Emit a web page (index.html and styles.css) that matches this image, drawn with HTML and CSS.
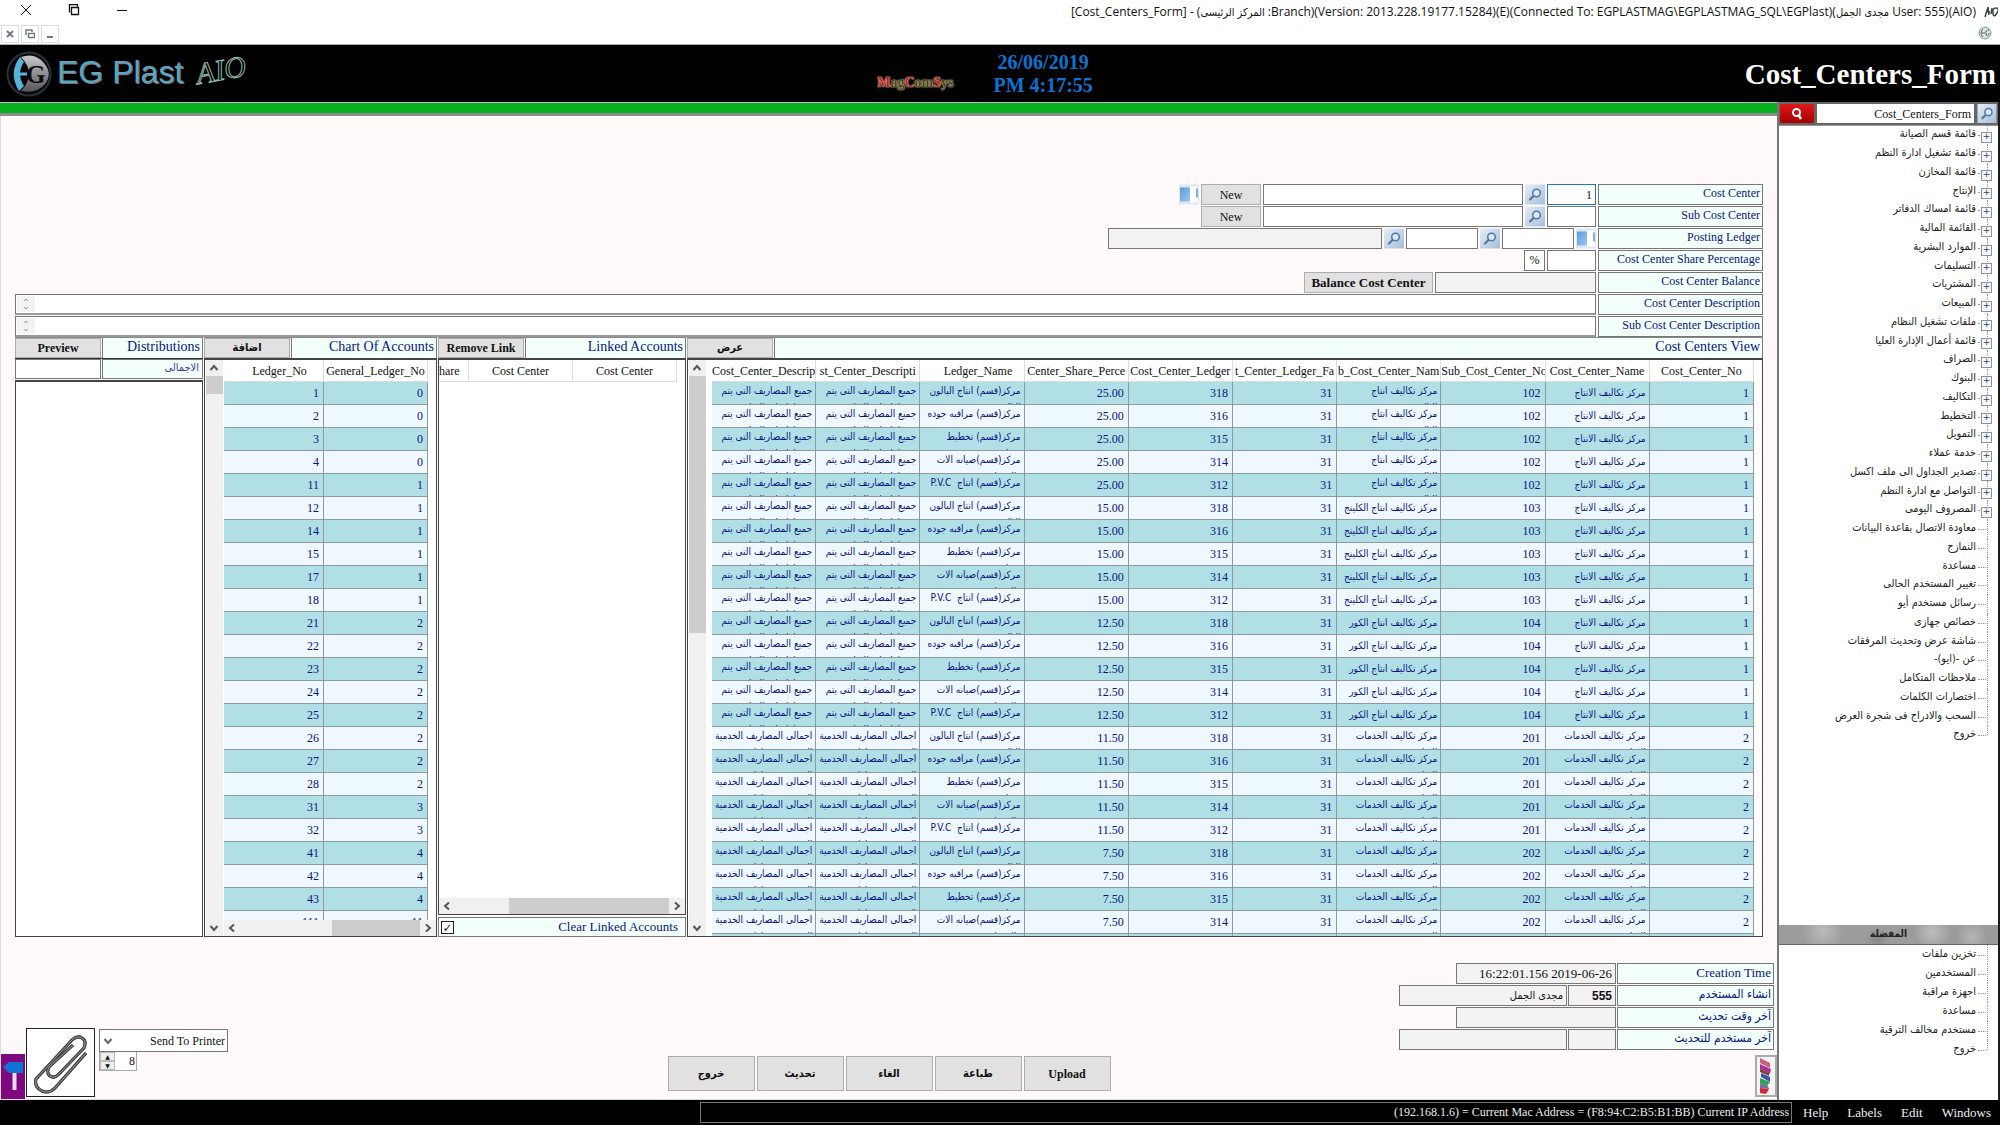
FILE: index.html
```html
<!DOCTYPE html>
<html lang="en">
<head>
<meta charset="utf-8">
<title>Cost_Centers_Form</title>
<link rel="stylesheet" href="styles.css">
</head>
<body>
<svg class="sprite" aria-hidden="true">
  <defs>
    <linearGradient id="lensbg" x1="0" y1="0" x2="1" y2="1"><stop offset="0" stop-color="#e6eef6"/><stop offset="1" stop-color="#a3bfdc"/></linearGradient>
    <linearGradient id="cardbg" x1="0" y1="0" x2="1" y2="1"><stop offset="0" stop-color="#5c9bd8"/><stop offset="1" stop-color="#9cc8f0"/></linearGradient>
    <linearGradient id="logobg" x1="0" y1="0" x2="0" y2="1"><stop offset="0" stop-color="#c9c9cc"/><stop offset="1" stop-color="#55555a"/></linearGradient>
  </defs>
  <symbol id="lens" viewBox="0 0 20 20">
    <rect width="20" height="20" fill="url(#lensbg)"/>
    <path d="M8.500 11.500 5 15" stroke="#5b7693" stroke-width="2.200" stroke-linecap="round"/>
    <circle cx="11.500" cy="8.500" r="3.800" fill="#d6ebfa" stroke="#54779c" stroke-width="1.500"/>
  </symbol>
  <symbol id="card" viewBox="0 0 20 20">
    <rect width="20" height="20" fill="#dbe9f6"/>
    <rect x="1" y="3" width="10" height="14" fill="url(#cardbg)"/>
    <rect x="11" y="2" width="8" height="16" fill="#fff"/>
    <rect x="17" y="4" width="2" height="9" fill="#7fb0e0"/>
  </symbol>
  <symbol id="up" viewBox="0 0 16 16"><path d="M4.500 10 8 6l3.500 4" fill="none" stroke="currentColor" stroke-width="2"/></symbol>
  <symbol id="down" viewBox="0 0 16 16"><path d="M4.500 6 8 10l3.500-4" fill="none" stroke="currentColor" stroke-width="2"/></symbol>
  <symbol id="left" viewBox="0 0 16 16"><path d="M10 4.500 6 8l4 3.500" fill="none" stroke="currentColor" stroke-width="2"/></symbol>
  <symbol id="right" viewBox="0 0 16 16"><path d="M6 4.500 10 8l-4 3.500" fill="none" stroke="currentColor" stroke-width="2"/></symbol>
</svg>

<header class="titlebar">
  <div class="caption-row">
    <div class="caption-buttons">
      <button aria-label="Close"><svg width="12" height="12"><path d="M1 1 11 11M11 1 1 11" stroke="#111"/></svg></button>
      <button aria-label="Restore"><svg width="12" height="12"><path d="M3.500 3.500h7v7h-7zM1.500 8.500v-8h8v2" fill="none" stroke="#111" stroke-width="1.300"/></svg></button>
      <button aria-label="Minimize"><svg width="12" height="12"><path d="M1 6.500h10" stroke="#111"/></svg></button>
    </div>
    <h1 class="window-title">[Cost_Centers_Form] - (<span class="ar">المركز الرئيسى</span> :Branch)(Version: 2013.228.19177.15284)(E)(Connected To: EGPLASTMAG\EGPLASTMAG_SQL\EGPlast)(<span class="ar">مجدى الجمل</span> User: 555)(AIO)</h1>
    <svg class="app-icon" width="14" height="12"><path d="M1 11 4 1l1 8M2 6h4M8 2 7 8M9 8q-1-6 3-6t1 5-4 1" fill="none" stroke="#3b4a44" stroke-width="1.500"/></svg>
  </div>
  <div class="child-row">
    <div class="child-buttons">
      <button aria-label="Close form"><svg width="8" height="8"><path d="M1 1 7 7M7 1 1 7" stroke="#70788a" stroke-width="2"/></svg></button>
      <button aria-label="Restore form"><svg width="10" height="10"><path d="M3.500 4.500h6v4h-6zM1 6V1h6v2" fill="none" stroke="#70788a" stroke-width="1.500"/></svg></button>
      <button aria-label="Minimize form"><svg width="8" height="8"><path d="M1 7h6" stroke="#70788a" stroke-width="2"/></svg></button>
    </div>
    <svg class="globe" width="14" height="14"><circle cx="7" cy="7" r="6" fill="#dfe5e2" stroke="#8a9a94"/><path d="M5 3q-4 4 0 8M4 7h3M11 4q-4 0-3 4t3 0v-1" fill="none" stroke="#4c6b62"/></svg>
  </div>
</header>

<div class="banner">
  <div class="brand">
    <svg width="46" height="46" viewBox="0 0 46 46">
      <circle cx="23" cy="23" r="21.500" fill="#08080a" stroke="#26333a" stroke-width="2"/>
      <path d="M14 6q-12 16-1 34l5-5q-8-12 0-24z" fill="#56b4d8"/>
      <path d="M14 23h7" stroke="#56b4d8" stroke-width="3"/>
      <path d="M15 6q14-5 23 6t1 21-24 7q16-17 0-34z" fill="url(#logobg)"/>
      <text x="20" y="32" class="logo-g">G</text>
    </svg>
    <span class="brand-name">EG Plast</span>
    <span class="brand-aio">AIO</span>
  </div>
  <div class="banner-mid">
    <span class="vendor"><b>M</b>ag<b>C</b>om<b>S</b>ys</span>
    <div class="clock"><span>26/06/2019</span><span>PM 4:17:55</span></div>
  </div>
  <h2 class="form-title">Cost_Centers_Form</h2>
</div>

<div class="shell">
<main class="workspace">
  <div class="greenbar"></div>
  <div class="content">
    <form class="fields" dir="rtl">
      <div class="row">
        <label class="tag" for="cc">Cost Center</label>
        <input id="cc" class="box w49 focus" value="1">
        <button type="button" class="ico" aria-label="Find cost center"><svg><use href="#lens"/></svg></button>
        <input class="box w260" aria-label="Cost center name">
        <button type="button" class="btn w60">New</button>
        <button type="button" class="ico" aria-label="Cost center card"><svg><use href="#card"/></svg></button>
      </div>
      <div class="row">
        <label class="tag" for="scc">Sub Cost Center</label>
        <input id="scc" class="box w49">
        <button type="button" class="ico" aria-label="Find sub cost center"><svg><use href="#lens"/></svg></button>
        <input class="box w260" aria-label="Sub cost center name">
        <button type="button" class="btn w60">New</button>
      </div>
      <div class="row">
        <label class="tag" for="pl">Posting Ledger</label>
        <button type="button" class="ico" aria-label="Ledger card"><svg><use href="#card"/></svg></button>
        <input id="pl" class="box w72">
        <button type="button" class="ico" aria-label="Find general ledger"><svg><use href="#lens"/></svg></button>
        <input class="box w72" aria-label="Ledger number">
        <button type="button" class="ico" aria-label="Find ledger"><svg><use href="#lens"/></svg></button>
        <input class="box off w274" aria-label="Ledger name" readonly>
      </div>
      <div class="row">
        <label class="tag" for="share">Cost Center Share Percentage</label>
        <input id="share" class="box w49">
        <span class="box pct">%</span>
      </div>
      <div class="row">
        <label class="tag" for="bal">Cost Center Balance</label>
        <input id="bal" class="box off w161" readonly>
        <button type="button" class="btn strong w129">Balance Cost Center</button>
      </div>
      <div class="row wide">
        <label class="tag" for="desc">Cost Center Description</label>
        <div class="memo"><textarea id="desc"></textarea><span class="mini"><svg><use href="#up"/></svg><svg><use href="#down"/></svg></span></div>
      </div>
      <div class="row wide">
        <label class="tag" for="sdesc">Sub Cost Center Description</label>
        <div class="memo"><textarea id="sdesc"></textarea><span class="mini"><svg><use href="#up"/></svg><svg><use href="#down"/></svg></span></div>
      </div>
    </form>

    <div class="panels">
      <section class="panel">
        <div class="head"><button class="btn strong w86">Preview</button><h3>Distributions</h3></div>
        <div class="total"><input id="total" class="box w86"><label class="ar" for="total">الاجمالى</label></div>
        <div class="frame grow"></div>
      </section>
      <section class="panel">
        <div class="head"><button class="btn strong ar w86">اضافة</button><h3>Chart Of Accounts</h3></div>
        <div class="frame grow split">
          <div class="vbar"><svg><use href="#up"/></svg><i class="thumb short"></i><svg class="end"><use href="#down"/></svg></div>
          <div class="pane">
            <div class="view"><table class="grid ledger"><colgroup><col class="c100"><col class="c104"></colgroup><thead><tr><th class="lead">Ledger_No</th><th>General_Ledger_No</th></tr></thead><tbody id="ledgers"></tbody></table></div>
            <div class="hbar"><svg><use href="#left"/></svg><i class="thumb"></i><svg><use href="#right"/></svg></div>
          </div>
        </div>
      </section>
      <section class="panel">
        <div class="head"><button class="btn strong w86">Remove Link</button><h3>Linked Accounts</h3></div>
        <div class="frame grow pane">
          <div class="view"><table class="grid linked"><thead><tr><th class="cut">hare</th><th>Cost Center</th><th>Cost Center</th></tr></thead></table></div>
          <div class="hbar long"><svg><use href="#left"/></svg><i class="thumb"></i><svg><use href="#right"/></svg></div>
        </div>
        <label class="clear"><input type="checkbox" checked><span>Clear Linked Accounts</span></label>
      </section>
      <section class="panel">
        <div class="head"><button class="btn strong ar w86">عرض</button><h3>Cost Centers View</h3></div>
        <div class="frame grow split main-view">
          <div class="vbar"><svg><use href="#up"/></svg><i class="thumb tall"></i><svg class="end"><use href="#down"/></svg></div>
          <div class="view"><table class="grid centers"><thead><tr><th>Cost_Center_Descrip</th><th>st_Center_Descripti</th><th class="lead">Ledger_Name</th><th>Center_Share_Perce</th><th>Cost_Center_Ledger</th><th>t_Center_Ledger_Fa</th><th>b_Cost_Center_Nam</th><th>Sub_Cost_Center_No</th><th>Cost_Center_Name</th><th>Cost_Center_No</th></tr></thead><tbody id="centers"></tbody></table></div>
        </div>
      </section>
    </div>

    <div class="bottom">
      <div class="tools">
        <button class="pin" aria-label="Pin"><svg width="24" height="45"><path d="M2 13 8 8h14v11H8z" fill="#1273d6"/><path d="M13.500 19v17" stroke="#eadcf0" stroke-width="4"/></svg></button>
        <button class="clip" aria-label="Attachments"><svg width="64" height="64" viewBox="0 0 64 64" fill="none"><path id="wire" d="M57 22 26 57q-6 6-13 3-8-4-6-12L43 9q5-5 10-2t2 10L30 43q-5 5-9 2t-1-9L44 14" stroke="#444" stroke-width="3"/><use href="#wire"/><path d="M57 22 26 57q-6 6-13 3-8-4-6-12L43 9q5-5 10-2t2 10L30 43q-5 5-9 2t-1-9L44 14" stroke="#999"/></svg></button>
        <div class="print">
          <div class="combo"><svg><use href="#down"/></svg><select aria-label="Output" dir="rtl"><option>Send To Printer</option></select></div>
          <div class="spin"><span class="steps"><button aria-label="More">▲</button><button aria-label="Less">▼</button></span><input aria-label="Copies" value="8"></div>
        </div>
      </div>
      <div class="actions">
        <button class="btn strong ar">خروج</button><button class="btn strong ar">تحديث</button><button class="btn strong ar">الغاء</button><button class="btn strong ar">طباعة</button><button class="btn strong">Upload</button>
      </div>
      <div class="audit" dir="rtl">
        <div class="row"><label class="tag" for="a1">Creation Time</label><input id="a1" class="box off w160" dir="ltr" value="16:22:01.156 2019-06-26" readonly></div>
        <div class="row"><label class="tag ar" for="a2">انشاء المستخدم</label><input id="a2" class="box off id" value="555" readonly><input class="box off ar w168" aria-label="Created by" value="مجدى الجمل" readonly></div>
        <div class="row"><label class="tag ar" for="a3">آخر وقت تحديث</label><input id="a3" class="box off w160" readonly></div>
        <div class="row"><label class="tag ar" for="a4">آخر مستخدم للتحديث</label><input id="a4" class="box off id" readonly><input class="box off w168" aria-label="Updated by" readonly></div>
        <button class="palette" aria-label="Colours"><svg width="17" height="38" viewBox="0 0 17 38"><path fill="#c8607a" d="M2 1 12 6v5L2 6z"/><path fill="#a8329a" d="M2 7l11 5-1 5L2 12z"/><path fill="#7a4a2c" d="M2 12l9 4v3L2 15z"/><path fill="#3b52b8" d="M3 16l9 4v5L3 20z"/><path fill="#2ea44f" d="M2 21l10 4-3 4-7-3z"/><path fill="#7a6fa0" d="M2 26l8 3 1 3-9-1z"/><path fill="#d02838" d="M2 31l9 1-3 5-6-1z"/></svg></button>
      </div>
    </div>
  </div>
</main>

<aside class="sidebar">
  <div class="search">
    <button class="red" aria-label="Search"><svg width="14" height="14"><circle cx="6.500" cy="5.500" r="3.500" fill="none" stroke="#fff" stroke-width="2"/><path d="M8.500 8 11 12" stroke="#fff" stroke-width="2.500"/></svg></button>
    <input aria-label="Form name" value="Cost_Centers_Form">
    <button class="ico" aria-label="Find form"><svg><use href="#lens"/></svg></button>
  </div>
  <ul class="tree ar" dir="rtl" id="menu"></ul>
  <h3 class="fav ar">المفضلة</h3>
  <ul class="tree favs ar" dir="rtl" id="favourites"></ul>
</aside>
</div>

<footer class="status">
  <div class="address">(192.168.1.6) = Current Mac Address = (F8:94:C2:B5:B1:BB) Current IP Address</div>
  <nav><button>Help</button><button>Labels</button><button>Edit</button><button>Windows</button></nav>
</footer>
<script src="app.js"></script>
</body>
</html>
```
FILE: app.js
```js
const fill = (id, html) => { document.getElementById(id).innerHTML = html; };

// Navigation tree: the first group of entries can be expanded.
const groups = ["قائمة قسم الصيانة", "قائمة تشغيل ادارة النظم", "قائمة المخازن", "الإنتاج", "قائمة امساك الدفاتر", "القائمة المالية", "الموارد البشرية", "التسليمات", "المشتريات", "المبيعات", "ملفات تشغيل النظام", "قائمة أعمال الإدارة العليا", "الصراف", "البنوك", "التكاليف", "التخطيط", "التمويل", "خدمة عملاء", "تصدير الجداول الى ملف اكسل", "التواصل مع ادارة النظم", "المصروف اليومى"];
const leaves = ["معاودة الاتصال بقاعدة البيانات", "النمازج", "مساعدة", "تغيير المستخدم الحالى", "رسائل مستخدم أيو", "خصائص جهازى", "شاشة عرض وتحديث المرفقات", "عن -(ايو)-", "ملاحظات المتكامل", "اختصارات الكلمات", "السحب والادراج فى شجرة العرض", "خروج"];
const favourites = ["تخزين ملفات", "المستخدمين", "اجهزة مراقبة", "مساعدة", "مستخدم مخالف الترقية", "خروج"];
const item = cls => text => `<li class="${cls}"><a href="#">${text}</a></li>`;
fill("menu", groups.map(item("group")).join("") + leaves.map(item("leaf")).join(""));
fill("favourites", favourites.map(item("leaf")).join(""));

// Chart of accounts: ledger number, general ledger number.
const ledgers = [[1,0],[2,0],[3,0],[4,0],[11,1],[12,1],[14,1],[15,1],[17,1],[18,1],[21,2],[22,2],[23,2],[24,2],[25,2],[26,2],[27,2],[28,2],[31,3],[32,3],[41,4],[42,4],[43,4],[111,11]];
fill("ledgers", ledgers.map(r => `<tr><td>${r[0]}</td><td>${r[1]}</td></tr>`).join(""));

// Cost centres: every sub centre is shared between the same five ledgers.
const parts = [[318, "مركز(قسم) انتاج البالون", "البالون"], [316, "مركز(قسم) مراقبه جوده", "جوده"], [315, "مركز(قسم) تخطيط", "ومتابعة"], [314, "مركز(قسم)صيانه الات", "والمعدات"], [312, "مركز(قسم) انتاج &nbsp;P.V.C", ""]];
const production = { no: 1, name: ["مركز تكاليف الانتاج", ""], text: ["جميع المصاريف التى يتم", "تحميلها على الانتاج"] };
const services = { no: 2, name: ["مركز تكاليف الخدمات", "الانتاجية"], text: ["اجمالى المصاريف الخدمية", "التى يتم تحميلها"] };
const subs = [
  [production, 102, ["مركز تكاليف انتاج", "البالون"], "25.00"],
  [production, 103, ["مركز تكاليف انتاج الكلينج", ""], "15.00"],
  [production, 104, ["مركز تكاليف انتاج الكور", ""], "12.50"],
  [services, 201, ["مركز تكاليف الخدمات", "الانتاجية"], "11.50"],
  [services, 202, ["مركز تكاليف الخدمات", "التسويقية"], "7.50"]
];
const words = ([first, second]) => second
  ? `<td class="txt two" dir="rtl"><div>${first}<br>${second}</div></td>`
  : `<td class="txt" dir="rtl"><div>${first}</div></td>`;
fill("centers", subs.flatMap(([c, no, name, share]) => parts.map(([ledger, title, more]) =>
  `<tr>${words(c.text)}${words(c.text)}${words([title, more || "&nbsp;"])}<td>${share}</td><td>${ledger}</td><td>31</td>${words(name)}<td>${no}</td>${words(c.name)}<td>${c.no}</td></tr>`
)).join(""));
```
FILE: styles.css
```css
* { box-sizing: border-box; }
body { margin: 0; min-height: 100vh; display: flex; flex-direction: column; background: #fff9f9; color: #111; font: 12px/16px "Liberation Serif", "DejaVu Sans", serif; }
button, input, select, textarea { font: inherit; color: inherit; margin: 0; padding: 0; border: 0; border-radius: 0; background: none; }
h1, h2, h3, ul { margin: 0; padding: 0; font-weight: normal; }
a { color: inherit; text-decoration: none; }
svg { display: block; flex: none; }
.sprite { position: absolute; width: 0; height: 0; }
.ar { font-family: "DejaVu Sans Condensed", "DejaVu Sans", sans-serif; font-size: 11px; }

.titlebar { height: 45px; background: #fff; border-bottom: 1px solid #aaa; }
.caption-row { display: flex; align-items: center; height: 24px; padding-right: 2px; }
.caption-buttons { display: flex; gap: 36px; padding: 0 20px 4px; }
.caption-buttons button { height: 14px; }
.window-title { flex: 1; text-align: right; font: 12px/16px "Open Sans", "DejaVu Sans", sans-serif; white-space: nowrap; padding-right: 8px; }
.child-row { display: flex; justify-content: space-between; padding-right: 8px; }
.child-buttons { display: flex; gap: 2px; padding: 1px; }
.child-buttons button { width: 18px; height: 18px; display: grid; place-items: center; border: 1px solid #ddd; }
.globe { margin-top: 2px; }

.banner { display: grid; grid-template-columns: 1fr auto 1fr; align-items: center; height: 57px; background: #000; padding: 0 4px 0 6px; color: #fff; }
.brand { display: flex; align-items: center; gap: 5px; }
.logo-g { font: bold 25px "Liberation Serif", serif; fill: #0a0a0c; }
.brand-name { font: 32px/36px "Liberation Sans", sans-serif; color: #55a9c4; text-shadow: 1px 1px 0 #8d6a6a; padding-bottom: 4px; }
.brand-aio { font: italic 30px/40px "Liberation Serif", serif; color: transparent; -webkit-text-stroke: 1px #8fb8a4; margin: -8px 0 0 8px; rotate: -10deg; }
.banner-mid { display: flex; align-items: center; gap: 40px; padding-right: 32px; }
.vendor { font: bold 14px/20px "Liberation Serif", serif; color: #4a4012; text-shadow: 0 0 2px #f4ecc0, 0 0 1px #f4ecc0; padding-top: 18px; }
.vendor b { color: #d21b1b; }
.clock { display: flex; flex-direction: column; text-align: center; font: bold 20px/23px "Liberation Serif", serif; color: #0b74d0; }
.form-title { text-align: right; font: bold 29px/32px "Liberation Serif", serif; }

.shell { flex: 1; display: flex; border-right: 2px solid #1c1c1c; }
.workspace { flex: 1; min-width: 0; display: flex; flex-direction: column; border-right: 2px solid #777; }
.greenbar { height: 14px; background: #08b01e; border-top: 1px solid #bbb; border-bottom: 3px solid #8d8d8d; }
.content { flex: 1; display: flex; flex-direction: column; border-left: 1px solid #ddd; padding-top: 68px; }

.fields { display: flex; flex-direction: column; gap: 1px; padding: 0 14px; }
.row { display: flex; height: 21px; gap: 2px; }
.tag { width: 165px; flex: none; border: 1px solid #777; background: #f2fffa; color: #0b1480; direction: ltr; text-align: right; padding: 0 2px; line-height: 17px; }
.box { border: 1px solid #777; background: #fff; min-width: 0; padding: 0 3px; }
.off { background: #f2f2f2; }
.focus { border-color: #1a78cc; }
.pct { width: 21px; text-align: center; line-height: 19px; }
.btn { background: #e1e1e1; border: 1px solid #adadad; text-align: center; color: #111; }
.strong { font-weight: bold; }
.ico { width: 20px; flex: none; }
.ico svg { width: 100%; height: 100%; }
.w49 { width: 49px; }
.w60 { width: 60px; }
.w72 { width: 72px; }
.w86 { width: 86px; flex: none; }
.w129 { width: 129px; font-size: 13px; }
.w160 { width: 160px; }
.w161 { width: 161px; }
.w168 { width: 168px; }
.w260 { width: 260px; }
.w274 { width: 274px; }
.memo { flex: 1; display: flex; background: #fff; border: 1px solid #777; border-bottom: 2px solid #999; }
.memo textarea { flex: 1; resize: none; outline: 0; overflow: hidden; }
.mini { width: 18px; background: #f3f3f3; color: #999; margin: 1px; display: flex; flex-direction: column; align-items: center; justify-content: space-between; }
.mini svg { width: 16px; height: 8px; }

.panels { display: grid; grid-template: minmax(0, 1fr) / 188px 233px 248px minmax(0, 1fr); gap: 1px; margin: 0 14px; height: 600px; }
.panel { display: flex; flex-direction: column; min-width: 0; min-height: 0; }
.head { display: flex; height: 21px; flex: none; gap: 1px; border-top: 1px solid #888; }
.head h3 { flex: 1; font-size: 14px; line-height: 18px; text-align: right; color: #0b1480; background: #f2fffa; border: 1px solid #777; border-width: 0 1px; padding-right: 2px; }
.total { display: flex; height: 21px; gap: 1px; margin-bottom: 1px; border-top: 1px solid #333; }
.total label { flex: 1; text-align: right; color: #3a3f9a; background: #f2fffa; border: 1px solid #777; padding: 1px 3px; line-height: 14px; }
.frame { background: #fff; border: 2px solid #444; border-width: 2px 1px 1px; }
.grow { flex: 1; min-height: 0; }
.split { display: flex; }
.pane { display: flex; flex-direction: column; flex: 1; min-width: 0; min-height: 0; }
.view { flex: 1; min-width: 0; min-height: 0; overflow: hidden; }
.vbar { width: 17px; flex: none; display: flex; flex-direction: column; background: #f0f0f0; color: #555; margin: 0 1px; }
.vbar svg, .hbar svg { width: 16px; height: 16px; }
.vbar .end { margin-top: auto; }
.thumb { background: #cdcdcd; }
.short { height: 18px; }
.tall { height: 257px; }
.hbar { display: flex; height: 16px; flex: none; background: #f0f0f0; color: #555; }
.hbar .thumb { width: 88px; margin-left: auto; }
.hbar.long .thumb { width: 160px; }
.clear { display: flex; align-items: center; height: 20px; flex: none; margin-top: 2px; border: 1px solid #777; background: #f2fffa; color: #0b1480; padding: 0 7px 0 2px; font-size: 13px; }
.clear span { flex: 1; text-align: right; }
.clear input { appearance: none; width: 13px; height: 13px; border: 1px solid #222; background: #fff; display: grid; place-items: center; }
.clear input:checked::before { content: "✓"; font: 12px/12px "DejaVu Sans", sans-serif; color: #222; }

.grid { border-collapse: separate; border-spacing: 0; table-layout: fixed; }
.grid th { height: 22px; padding: 0; font-weight: normal; text-align: center; overflow: hidden; white-space: nowrap; border: 1px solid #ddd; border-width: 0 1px 1px 0; color: #111; }
.grid .lead { padding-left: 12px; }
.grid td { height: 23px; padding: 0 4px; text-align: right; color: #0b1480; border: 1px solid #8d9a9d; border-width: 0 1px 1px 0; background: #f0f8ff; line-height: 16px; }
.grid tbody tr:nth-child(odd) td { background: #b0e0e6; }
.ledger { width: 204px; }
.c100 { width: 100px; }
.c104 { width: 104px; }
.linked { width: 238px; }
.linked .cut { width: 30px; text-align: left; }
.main-view .view { padding: 0 8px 0 5px; }
.centers { width: 100%; }
.grid .txt { padding: 0 3px; font: 10px/14px "DejaVu Sans Condensed", "DejaVu Sans", sans-serif; white-space: nowrap; overflow: hidden; }
.txt div { height: 15px; overflow: hidden; }
.txt.two div { height: 22px; line-height: 17px; }

.bottom { flex: 1; display: grid; grid-template-columns: 1fr auto 1fr; align-items: end; margin-top: 26px; border-bottom: 1px solid #ddd; }
.tools { display: flex; align-items: flex-end; gap: 1px; }
.pin { background: #80087f; height: 45px; }
.clip { width: 69px; height: 69px; margin-bottom: 2px; background: #fff; border: 1px solid #222; display: grid; place-items: center; }
.print { height: 70px; padding-left: 3px; }
.combo { display: flex; align-items: center; width: 129px; height: 23px; background: #fff; border: 1px solid #777; color: #666; }
.combo svg { width: 16px; height: 16px; }
.combo select { flex: 1; appearance: none; text-align: right; color: #111; height: 20px; padding: 0 2px; }
.spin { display: flex; width: 38px; height: 19px; background: #fff; border: 1px solid #aaa; border-top: 0; }
.steps { width: 15px; display: flex; flex-direction: column; }
.steps button { flex: 1; background: #eee; border: 1px solid #bbb; font: 6px/6px "DejaVu Sans", sans-serif; }
.spin input { width: 20px; text-align: right; }
.actions { display: flex; gap: 2px; padding-bottom: 8px; }
.actions .btn { width: 87px; height: 35px; }
.audit { justify-self: end; align-self: start; display: flex; flex-direction: column; gap: 1px; width: 378px; padding-right: 3px; }
.audit .row { gap: 1px; }
.audit .tag { width: 157px; font-size: 13px; }
.audit .tag.ar { font-size: 12px; }
.audit .off { text-align: right; font-size: 13px; }
.audit .off.ar { font-size: 11px; }
.audit .id { width: 48px; font: bold 12px "Liberation Sans", sans-serif; }
.palette { align-self: flex-start; margin: 4px -3px 0 0; width: 22px; height: 42px; border: 2px solid #aaa; background: #f5f5f5; }

.sidebar { width: 219px; flex: none; display: flex; flex-direction: column; background: #fff; }
.search { display: flex; gap: 3px; height: 24px; padding: 2px 1px; background: #666; border-bottom: 1px solid #999; }
.search input { flex: 1; min-width: 0; background: #fff; text-align: right; padding-right: 3px; }
.red { width: 34px; background: linear-gradient(#e01818, #a80000); border-radius: 2px; display: grid; place-items: center; }
.tree { list-style: none; height: 619px; display: flex; flex-direction: column; color: #222; }
.tree li { flex: 1; display: flex; align-items: center; padding-right: 10px; position: relative; }
.tree li::before { content: ""; align-self: stretch; border-right: 1px dotted #999; }
.tree li a { padding: 0 11px 3px 0; white-space: nowrap; line-height: 15px; }
.tree li::after { content: ""; position: absolute; right: 12px; top: 50%; width: 8px; border-top: 1px dotted #999; }
.group a::before { content: "+"; position: absolute; z-index: 1; right: 6px; top: 6px; width: 9px; height: 9px; border: 1px solid #8894a4; background: #f4f6f8; color: #345; font: 9px/7px "DejaVu Sans", sans-serif; text-align: center; }
.tree li:last-child::before { align-self: flex-start; height: 50%; }
.fav { margin-top: auto; height: 20px; line-height: 18px; text-align: center; font-weight: bold; color: #222; border-bottom: 1px solid #666; background: radial-gradient(circle at 20% 30%, #bbb, transparent 12%), radial-gradient(circle at 45% 80%, #888, transparent 10%), radial-gradient(circle at 70% 40%, #bdbdbd, transparent 12%), radial-gradient(circle at 88% 60%, #b5b5b5, transparent 8%), #9c9c9c; }
.sidebar .fav { font-size: 10px; }
.favs { height: 114px; margin-bottom: 41px; }

.status { display: flex; height: 25px; padding: 2px 9px 2px 700px; background: #000; color: #eee; font-size: 12px; }
.address { flex: 1; border: 1px solid #777; text-align: right; padding-right: 2px; line-height: 18px; white-space: nowrap; }
.status nav { display: flex; gap: 19px; padding-left: 11px; font-size: 13px; }
```
